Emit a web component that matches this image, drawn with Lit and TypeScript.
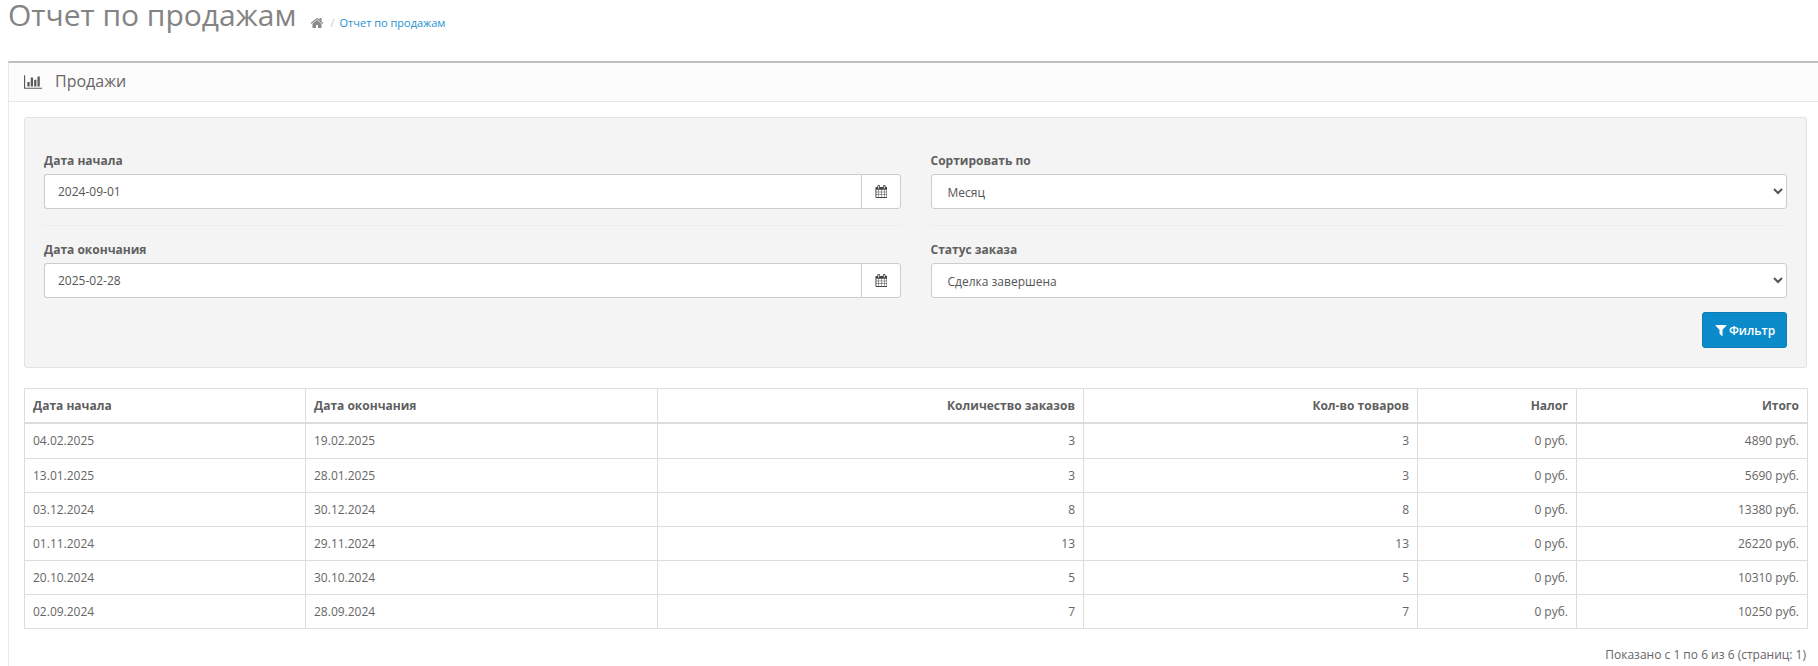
import { LitElement, html, css, svg } from "lit";
import { customElement } from "lit/decorators.js";

const home = svg`<path d="M1472 992v480q0 26-19 45t-45 19h-384v-384h-256v384h-384q-26 0-45-19t-19-45v-480q0-1 .5-3t.5-3l575-474 575 474q1 2 1 6zm223-69l-62 74q-8 9-21 11h-3q-13 0-21-7l-692-577-692 577q-12 8-24 7-13-2-21-11l-62-74q-8-10-7-23.5t11-21.5l719-599q32-26 76-26t76 26l244 204v-195q0-14 9-23t23-9h192q14 0 23 9t9 23v408l219 182q10 8 11 21.5t-7 23.5z"/>`;
const chart = svg`<path d="M640 896v512h-256v-512h256zm384-512v1024h-256v-1024h256zm1024 1152v128h-2048v-1536h128v1408h1920zm-640-896v768h-256v-768h256zm384-384v1152h-256v-1152h256z"/>`;
const cal = svg`<path d="M192 1664h288v-288h-288v288zm352 0h320v-288h-320v288zm-352-352h288v-320h-288v320zm352 0h320v-320h-320v320zm-352-384h288v-288h-288v288zm736 736h320v-288h-320v288zm-384-736h320v-288h-320v288zm768 736h288v-288h-288v288zm-384-352h320v-320h-320v320zm-352-864v-288q0-13-9.500-22.500t-22.500-9.500h-64q-13 0-22.500 9.500t-9.500 22.500v288q0 13 9.500 22.500t22.500 9.500h64q13 0 22.500-9.500t9.500-22.500zm736 864h288v-320h-288v320zm-384-384h320v-288h-320v288zm384 0h288v-288h-288v288zm32-480v-288q0-13-9.500-22.500t-22.500-9.500h-64q-13 0-22.500 9.500t-9.500 22.500v288q0 13 9.500 22.500t22.500 9.500h64q13 0 22.500-9.500t9.500-22.500zm384-64v1280q0 52-38 90t-90 38h-1408q-52 0-90-38t-38-90v-1280q0-52 38-90t90-38h128v-96q0-66 47-113t113-47h64q66 0 113 47t47 113v96h384v-96q0-66 47-113t113-47h64q66 0 113 47t47 113v96h128q52 0 90 38t38 90z"/>`;
const filter = svg`<path d="M1595 295q17 41-14 70l-493 493v742q0 42-39 59-13 5-25 5-27 0-45-19l-256-256q-19-19-19-45v-486l-493-493q-31-29-14-70 17-39 59-39h1280q42 0 59 39z"/>`;

const rows = [
  ["04.02.2025", "19.02.2025", "3", "3", "0 руб.", "4890 руб."],
  ["13.01.2025", "28.01.2025", "3", "3", "0 руб.", "5690 руб."],
  ["03.12.2024", "30.12.2024", "8", "8", "0 руб.", "13380 руб."],
  ["01.11.2024", "29.11.2024", "13", "13", "0 руб.", "26220 руб."],
  ["20.10.2024", "30.10.2024", "5", "5", "0 руб.", "10310 руб."],
  ["02.09.2024", "28.09.2024", "7", "7", "0 руб.", "10250 руб."],
];
const heads = ["Дата начала", "Дата окончания", "Количество заказов", "Кол-во товаров", "Налог", "Итого"];

@customElement("app-root")
export class AppRoot extends LitElement {
  static styles = css`
    :host {
      display: block;
      width: 1818px;
      height: 666px;
      overflow: hidden;
      background: #fff;
      font-family: "Open Sans", "Noto Sans", sans-serif;
      font-size: 12px;
      line-height: 17.14px;
      color: #666;
      box-sizing: border-box;
      padding-left: 8px;
    }
    * { box-sizing: border-box; }
    .page-header {
      display: flex;
      align-items: flex-start;
      height: 61px;
    }
    h1 {
      margin: 0;
      font-size: 30px;
      font-weight: 400;
      line-height: 30px;
      color: #848484;
    }
    .crumbs {
      display: flex;
      align-items: center;
      margin: 14px 0 0 13px;
      font-size: 11px;
    }
    .crumbs svg { width: 14px; height: 14px; fill: #8a8a8a; display: block; }
    .sep { color: #ccc; margin: 0 5px 0 7px; }
    .crumbs a { color: #1e91cf; text-decoration: none; }
    .panel {
      width: 1815px;
      border: 1px solid #e8e8e8;
      border-top: 2px solid #bfbfbf;
    }
    .panel-heading {
      display: flex;
      align-items: center;
      height: 39px;
      padding-left: 15px;
      background: #fcfcfc;
      border-bottom: 1px solid #e8e8e8;
      font-size: 16px;
      font-weight: 400;
      color: #666;
    }
    .panel-heading svg { width: 18px; height: 16px; fill: #595959; margin-right: 13px; display: block; }
    .panel-body { padding: 15px; }
    .well {
      background: #f4f4f4;
      border: 1px solid #e3e3e3;
      border-radius: 3px;
      padding: 19px;
      margin-bottom: 20px;
    }
    .grid {
      display: grid;
      grid-template-columns: 1fr 1fr;
      column-gap: 30px;
    }
    .group { padding: 15px 0 14px; }
    .group:first-child { padding-bottom: 16px; }
    .group + .group { border-top: 1px solid #ededed; }
    label {
      display: block;
      font-weight: 700;
      margin-bottom: 5px;
      color: #5f5f5f;
    }
    .input-group { display: flex; height: 35px; }
    input, select {
      font: inherit;
      color: #555;
      background-color: #fff;
      border: 1px solid #ccc;
      height: 35px;
      width: 100%;
      border-radius: 3px;
      outline: none;
    }
    input {
      flex: 1;
      padding: 8px 13px;
      border-radius: 3px 0 0 3px;
      border-right: 0;
    }
    select { padding: 8px 12px; }
    .addon {
      width: 40px;
      flex: none;
      display: flex;
      align-items: center;
      justify-content: center;
      background: #fff;
      border: 1px solid #ccc;
      border-radius: 0 3px 3px 0;
    }
    .addon svg { width: 12px; height: 13px; fill: #444; display: block; }
    .actions { display: flex; justify-content: flex-end; }
    button {
      display: flex;
      align-items: center;
      justify-content: center;
      gap: 1px;
      width: 85px;
      height: 36px;
      font: inherit;
      font-weight: 600;
      color: #fff;
      background: #0c8bcb;
      border: 1px solid #0a7cb6;
      border-radius: 3px;
      padding: 0;
    }
    button svg { width: 14px; height: 14px; fill: #fff; display: block; }
    table {
      width: 1783px;
      table-layout: fixed;
      border-collapse: collapse;
      border: 1px solid #ddd;
    }
    th, td {
      border: 1px solid #ddd;
      padding: 8px;
      text-align: left;
      font-weight: 400;
      height: 34.14px;
    }
    th { font-weight: 700; color: #5f5f5f; border-bottom-width: 2px; }
    .r { text-align: right; }
    .c1 { width: 281px; }
    .c2 { width: 352px; }
    .c3 { width: 426px; }
    .c4 { width: 334px; }
    .c5 { width: 159px; }
    .c6 { width: 231px; }
    .pager { text-align: right; margin-top: 17px; padding-right: 1px; }
  `;

  private field(label: string, value: string) {
    return html`<div>
      <label>${label}</label>
      <div class="input-group">
        <input type="text" .value=${value} />
        <span class="addon"><svg viewBox="0 0 1664 1792">${cal}</svg></span>
      </div>
    </div>`;
  }

  private select(label: string, value: string) {
    return html`<div>
      <label>${label}</label>
      <select><option>${value}</option></select>
    </div>`;
  }

  render() {
    return html`
      <div class="page-header">
        <h1>Отчет по продажам</h1>
        <div class="crumbs">
          <svg viewBox="0 0 1792 1792">${home}</svg>
          <span class="sep">/</span>
          <a href="#">Отчет по продажам</a>
        </div>
      </div>
      <div class="panel">
        <div class="panel-heading">
          <svg viewBox="0 0 2048 1792">${chart}</svg>
          <span>Продажи</span>
        </div>
        <div class="panel-body">
          <div class="well">
            <div class="grid">
              <div>
                <div class="group">${this.field("Дата начала", "2024-09-01")}</div>
                <div class="group">${this.field("Дата окончания", "2025-02-28")}</div>
              </div>
              <div>
                <div class="group">${this.select("Сортировать по", "Месяц")}</div>
                <div class="group">${this.select("Статус заказа", "Сделка завершена")}</div>
                <div class="actions">
                  <button><svg viewBox="0 0 1792 1792">${filter}</svg>Фильтр</button>
                </div>
              </div>
            </div>
          </div>
          <table>
            <colgroup>
              ${[1, 2, 3, 4, 5, 6].map((n) => html`<col class="c${n}" />`)}
            </colgroup>
            <thead>
              <tr>${heads.map((h, i) => html`<th class=${i > 1 ? "r" : ""}>${h}</th>`)}</tr>
            </thead>
            <tbody>
              ${rows.map(
                (r) => html`<tr>${r.map((c, i) => html`<td class=${i > 1 ? "r" : ""}>${c}</td>`)}</tr>`
              )}
            </tbody>
          </table>
          <div class="pager">Показано с 1 по 6 из 6 (страниц: 1)</div>
        </div>
      </div>
    `;
  }
}
